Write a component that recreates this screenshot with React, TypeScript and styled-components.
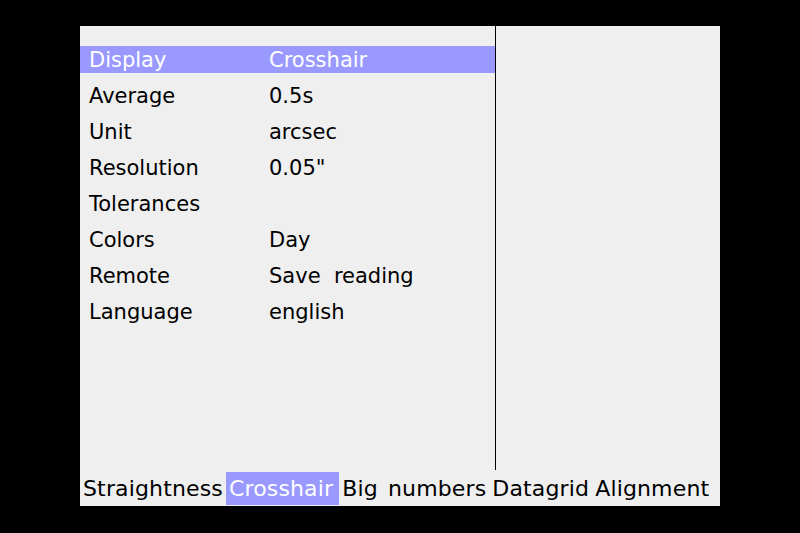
import * as React from "react";
import styled, { createGlobalStyle } from "styled-components";

const GlobalStyle = createGlobalStyle`
  html, body {
    margin: 0;
    padding: 0;
    background: #000;
  }
`;

const Screen = styled.div`
  width: 640px;
  height: 480px;
  padding: 26px 80px 27px;
  background: #000;
  font-family: "DejaVu Sans", sans-serif;
`;

const Panel = styled.div`
  display: flex;
  flex-direction: column;
  width: 640px;
  height: 480px;
  background: #efefef;
  color: #000;
`;

const Main = styled.div`
  display: flex;
  height: 444px;
`;

const Menu = styled.div`
  display: flex;
  flex-direction: column;
  gap: 9px;
  width: 415px;
  padding-top: 20px;
  border-right: 1px solid #000;
`;

const Row = styled.div<{ $active?: boolean }>`
  display: flex;
  align-items: center;
  height: 27px;
  padding-left: 9px;
  font-size: 21px;
  background: ${(p) => (p.$active ? "#9999ff" : "transparent")};
  color: ${(p) => (p.$active ? "#fff" : "#000")};
`;

const Label = styled.span`
  width: 180px;
`;

const Value = styled.span`
  white-space: pre;
`;

const Side = styled.div`
  flex: 1;
`;

const TabBar = styled.div`
  display: flex;
  align-items: center;
  height: 36px;
`;

const Tab = styled.div<{ $active?: boolean }>`
  display: flex;
  align-items: center;
  height: 33px;
  padding: 0 ${(p) => (p.$active ? "6px" : "3px")} 0 3px;
  font-size: 22px;
  letter-spacing: 0.15px;
  word-spacing: 3px;
  white-space: pre;
  background: ${(p) => (p.$active ? "#9999ff" : "transparent")};
  color: ${(p) => (p.$active ? "#fff" : "#000")};
`;

const items = [
  { label: "Display", value: "Crosshair" },
  { label: "Average", value: "0.5s" },
  { label: "Unit", value: "arcsec" },
  { label: "Resolution", value: "0.05\"" },
  { label: "Tolerances", value: "" },
  { label: "Colors", value: "Day" },
  { label: "Remote", value: "Save  reading" },
  { label: "Language", value: "english" },
];

const tabs = ["Straightness", "Crosshair", "Big numbers", "Datagrid", "Alignment"];

export default function App() {
  return (
    <>
      <GlobalStyle />
      <Screen>
        <Panel>
          <Main>
            <Menu>
              {items.map((it, i) => (
                <Row key={it.label} $active={i === 0}>
                  <Label>{it.label}</Label>
                  <Value>{it.value}</Value>
                </Row>
              ))}
            </Menu>
            <Side />
          </Main>
          <TabBar>
            {tabs.map((t) => (
              <Tab key={t} $active={t === "Crosshair"}>
                {t}
              </Tab>
            ))}
          </TabBar>
        </Panel>
      </Screen>
    </>
  );
}
